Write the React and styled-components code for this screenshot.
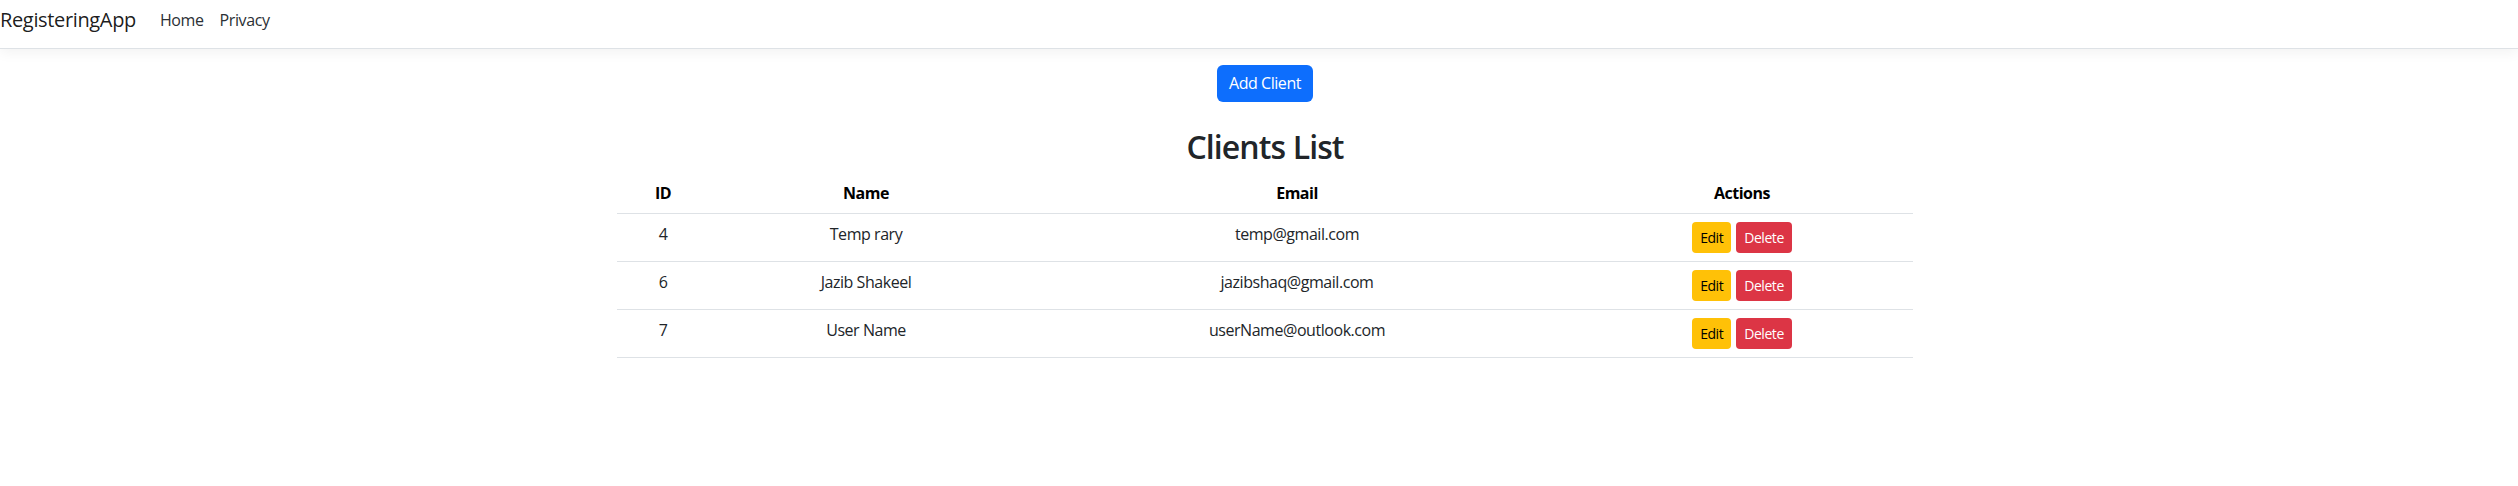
import React from "react";
import styled, { createGlobalStyle } from "styled-components";

const Global = createGlobalStyle`
  html, body { margin: 0; padding: 0; background: #fff; }
  body {
    font-family: "Open Sans", "Noto Sans", "Liberation Sans", sans-serif;
    font-size: 16px;
    line-height: 1.5;
    color: #212529;
  }
  * { box-sizing: border-box; }
`;

const Navbar = styled.header`
  display: flex;
  align-items: center;
  height: 49px;
  padding: 0 0 8px 0;
  background: #fff;
  border-bottom: 1px solid #dee2e6;
  box-shadow: 0 4px 12px rgba(0, 0, 0, 0.05);
  margin-bottom: 16px;
`;

const Brand = styled.a`
  font-size: 20px;
  line-height: 30px;
  padding: 5px 0;
  margin-right: 16px;
  color: rgba(0, 0, 0, 0.9);
  text-decoration: none;
  letter-spacing: -0.35px;
`;

const NavLinks = styled.nav`
  display: flex;
`;

const NavLink = styled.a`
  padding: 8px;
  font-size: 16px;
  line-height: 24px;
  color: #2b3035;
  text-decoration: none;
  letter-spacing: -0.4px;
`;

const Page = styled.div`
  padding-left: 12px;
`;

const Container = styled.main`
  max-width: 1320px;
  margin: 0 auto;
  padding: 0 12px;
  display: flex;
  flex-direction: column;
  align-items: center;
`;

const Button = styled.button`
  font-family: inherit;
  border: none;
  cursor: pointer;
  color: ${(p) => p.$fg};
  background: ${(p) => p.$bg};
  font-size: ${(p) => (p.$small ? "14px" : "16px")};
  line-height: ${(p) => (p.$small ? "21px" : "24px")};
  padding: ${(p) => (p.$small ? "5px 8px" : "6px 12px 7px")};
  border-radius: ${(p) => (p.$small ? "4px" : "6px")};
  letter-spacing: -0.45px;
`;

const Title = styled.h2`
  font-size: 32px;
  font-weight: 600;
  line-height: 1.2;
  margin: 26px 0 7px;
  letter-spacing: -0.9px;
  color: #212529;
`;

const Table = styled.table`
  width: 100%;
  border-collapse: collapse;
  table-layout: fixed;
`;

const Th = styled.th`
  font-weight: 700;
  color: #000;
  padding: 8px;
  text-align: center;
  line-height: 24px;
  border-bottom: 1px solid #dee2e6;
  letter-spacing: -0.5px;
`;

const Td = styled.td`
  padding: 8px;
  height: 48px;
  text-align: center;
  vertical-align: top;
  line-height: 24px;
  border-bottom: 1px solid #dee2e6;
  letter-spacing: -0.45px;
`;

const Actions = styled.div`
  display: flex;
  justify-content: center;
  gap: 5px;
`;

const clients = [
  { id: 4, name: "Temp rary", email: "temp@gmail.com" },
  { id: 6, name: "Jazib Shakeel", email: "jazibshaq@gmail.com" },
  { id: 7, name: "User Name", email: "userName@outlook.com" },
];

export default function App() {
  return (
    <>
      <Global />
      <Navbar>
        <Brand href="#">RegisteringApp</Brand>
        <NavLinks>
          <NavLink href="#">Home</NavLink>
          <NavLink href="#">Privacy</NavLink>
        </NavLinks>
      </Navbar>
      <Page>
        <Container>
          <Button $bg="#0d6efd" $fg="#fff">Add Client</Button>
          <Title>Clients List</Title>
          <Table>
            <colgroup>
              <col style={{ width: "92px" }} />
              <col style={{ width: "314px" }} />
              <col style={{ width: "548px" }} />
              <col style={{ width: "342px" }} />
            </colgroup>
            <thead>
              <tr>
                <Th>ID</Th>
                <Th>Name</Th>
                <Th>Email</Th>
                <Th>Actions</Th>
              </tr>
            </thead>
            <tbody>
              {clients.map((c) => (
                <tr key={c.id}>
                  <Td>{c.id}</Td>
                  <Td>{c.name}</Td>
                  <Td>{c.email}</Td>
                  <Td>
                    <Actions>
                      <Button $small $bg="#ffc107" $fg="#000">Edit</Button>
                      <Button $small $bg="#dc3545" $fg="#fff">Delete</Button>
                    </Actions>
                  </Td>
                </tr>
              ))}
            </tbody>
          </Table>
        </Container>
      </Page>
    </>
  );
}
